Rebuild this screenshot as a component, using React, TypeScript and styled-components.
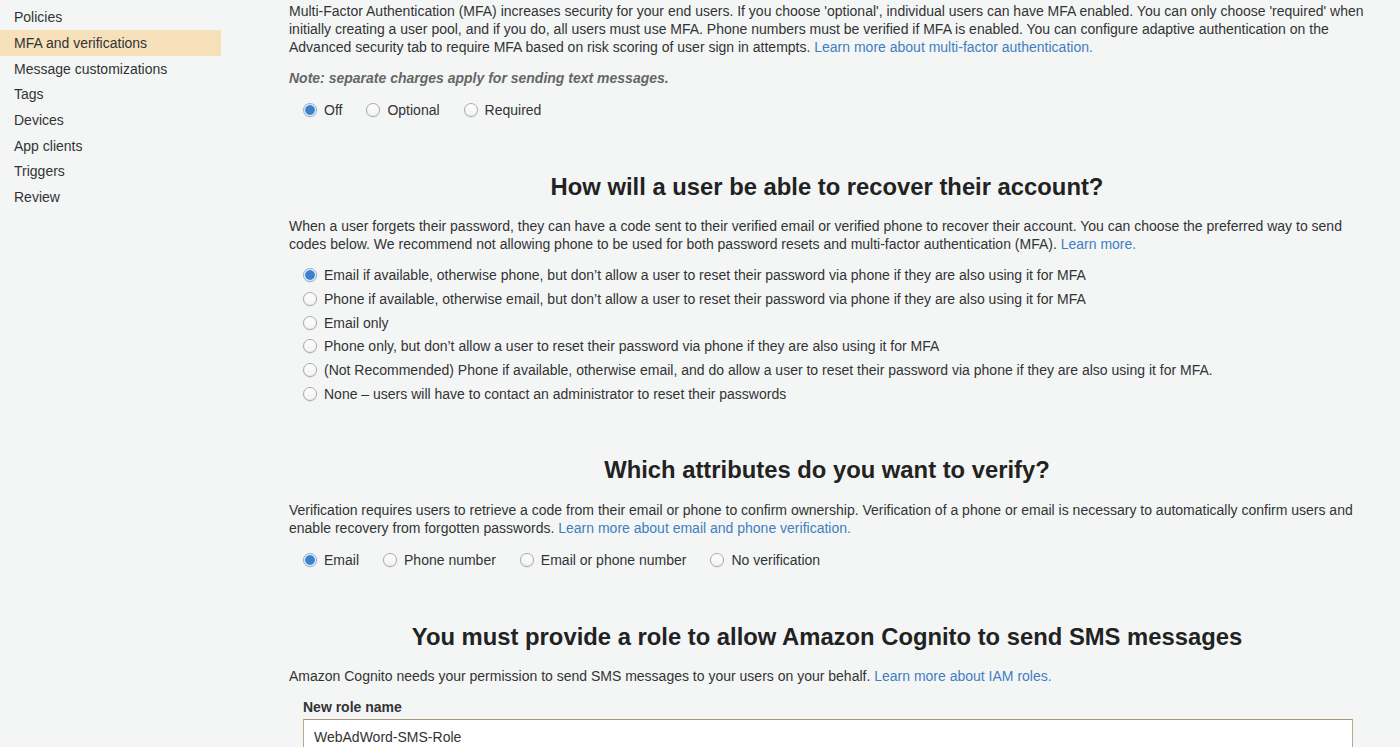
import React from "react";
import styled, { createGlobalStyle } from "styled-components";

const Global = createGlobalStyle`
  html, body { margin: 0; padding: 0; background: #f4f6f6; }
  body { font-family: "Liberation Sans", Arial, Helvetica, sans-serif; color: #333; font-size: 14px; }
`;

const Page = styled.div`
  display: flex;
  width: 1400px;
  height: 747px;
  overflow: hidden;
  background: #f4f6f6;
`;

const Sidebar = styled.nav`
  width: 221px;
  flex: none;
  padding-top: 4.15px;
  display: flex;
  flex-direction: column;
`;

const NavItem = styled.div<{ $active?: boolean }>`
  box-sizing: border-box;
  height: 25.7px;
  padding-top: 2px;
  line-height: 23.7px;
  padding-left: 14px;
  font-size: 14px;
  color: #333;
  background: ${(p) => (p.$active ? "#f6e1bb" : "transparent")};
`;

const Main = styled.main`
  margin-left: 68px;
  width: 1076px;
  padding-top: 2px;
  display: flex;
  flex-direction: column;
`;

const Para = styled.p<{ $mt?: number }>`
  margin: ${(p) => p.$mt ?? 0}px 0 0 0;
  font-size: 14px;
  line-height: 18px;
  color: #333;
`;

const Note = styled.p`
  margin: 13px 0 0 0;
  font-size: 14px;
  line-height: 18px;
  font-weight: bold;
  font-style: italic;
  color: #666;
`;

const Link = styled.a`
  color: #3f7ec1;
  text-decoration: none;
`;

const Heading = styled.h2<{ $mt: number }>`
  margin: ${(p) => p.$mt}px 0 0 0;
  font-size: 23.8px;
  line-height: 28px;
  font-weight: bold;
  text-align: center;
  color: #222;
`;

const RadioRow = styled.div<{ $mt: number }>`
  margin-top: ${(p) => p.$mt}px;
  padding-left: 14px;
  display: flex;
  gap: 24px;
`;

const RadioList = styled.div<{ $mt: number }>`
  margin-top: ${(p) => p.$mt}px;
  padding-left: 14px;
  display: flex;
  flex-direction: column;
  gap: 5.8px;
`;

const RadioItem = styled.label`
  display: flex;
  align-items: center;
  gap: 7px;
  height: 18px;
  font-size: 14px;
  color: #333;
  white-space: nowrap;
`;

const Circle = styled.span<{ $checked?: boolean }>`
  width: 14px;
  height: 14px;
  box-sizing: border-box;
  border-radius: 50%;
  flex: none;
  border: 1px solid ${(p) => (p.$checked ? "#8fb0d8" : "#a9a9a9")};
  background: ${(p) =>
    p.$checked
      ? "radial-gradient(circle, #3f80cc 0, #3f80cc 4.4px, #e3ecf7 5.2px)"
      : "linear-gradient(#ffffff, #f2f2f2)"};
  box-shadow: 0 0.5px 1px rgba(0, 0, 0, 0.12);
`;

const Radio = ({ label, checked }: { label: string; checked?: boolean }) => (
  <RadioItem>
    <Circle $checked={checked} />
    {label}
  </RadioItem>
);

const RoleForm = styled.div`
  margin-top: 13px;
  padding-left: 14px;
  display: flex;
  flex-direction: column;
  gap: 3px;
`;

const FieldLabel = styled.div`
  font-size: 14px;
  line-height: 18px;
  font-weight: bold;
  color: #333;
`;

const Input = styled.div`
  height: 36px;
  box-sizing: border-box;
  width: 1050px;
  border: 1px solid #b9a98f;
  border-top-color: #a89676;
  background: #fff;
  padding: 0 10px;
  display: flex;
  align-items: center;
  font-size: 14px;
  color: #333;
`;

const navItems = [
  "Policies",
  "MFA and verifications",
  "Message customizations",
  "Tags",
  "Devices",
  "App clients",
  "Triggers",
  "Review",
];

export default function App() {
  return (
    <Page>
      <Global />
      <Sidebar>
        {navItems.map((n) => (
          <NavItem key={n} $active={n === "MFA and verifications"}>
            {n}
          </NavItem>
        ))}
      </Sidebar>
      <Main>
        <Para>
          Multi-Factor Authentication (MFA) increases security for your end users. If you choose
          'optional', individual users can have MFA enabled. You can only choose 'required' when
          initially creating a user pool, and if you do, all users must use MFA. Phone numbers must
          be verified if MFA is enabled. You can configure adaptive authentication on the Advanced
          security tab to require MFA based on risk scoring of user sign in attempts.{" "}
          <Link>Learn more about multi-factor authentication.</Link>
        </Para>
        <Note>Note: separate charges apply for sending text messages.</Note>
        <RadioRow $mt={14}>
          <Radio label="Off" checked />
          <Radio label="Optional" />
          <Radio label="Required" />
        </RadioRow>

        <Heading $mt={54}>How will a user be able to recover their account?</Heading>
        <Para $mt={16}>
          When a user forgets their password, they can have a code sent to their verified email or
          verified phone to recover their account. You can choose the preferred way to send codes
          below. We recommend not allowing phone to be used for both password resets and
          multi-factor authentication (MFA). <Link>Learn more.</Link>
        </Para>
        <RadioList $mt={13}>
          <Radio
            checked
            label="Email if available, otherwise phone, but don’t allow a user to reset their password via phone if they are also using it for MFA"
          />
          <Radio label="Phone if available, otherwise email, but don’t allow a user to reset their password via phone if they are also using it for MFA" />
          <Radio label="Email only" />
          <Radio label="Phone only, but don’t allow a user to reset their password via phone if they are also using it for MFA" />
          <Radio label="(Not Recommended) Phone if available, otherwise email, and do allow a user to reset their password via phone if they are also using it for MFA." />
          <Radio label="None – users will have to contact an administrator to reset their passwords" />
        </RadioList>

        <Heading $mt={53}>Which attributes do you want to verify?</Heading>
        <Para $mt={17}>
          Verification requires users to retrieve a code from their email or phone to confirm
          ownership. Verification of a phone or email is necessary to automatically confirm users
          and enable recovery from forgotten passwords.{" "}
          <Link>Learn more about email and phone verification.</Link>
        </Para>
        <RadioRow $mt={14}>
          <Radio label="Email" checked />
          <Radio label="Phone number" />
          <Radio label="Email or phone number" />
          <Radio label="No verification" />
        </RadioRow>

        <Heading $mt={54}>You must provide a role to allow Amazon Cognito to send SMS messages</Heading>
        <Para $mt={16}>
          Amazon Cognito needs your permission to send SMS messages to your users on your behalf.{" "}
          <Link>Learn more about IAM roles.</Link>
        </Para>
        <RoleForm>
          <FieldLabel>New role name</FieldLabel>
          <Input>WebAdWord-SMS-Role</Input>
        </RoleForm>
      </Main>
    </Page>
  );
}
